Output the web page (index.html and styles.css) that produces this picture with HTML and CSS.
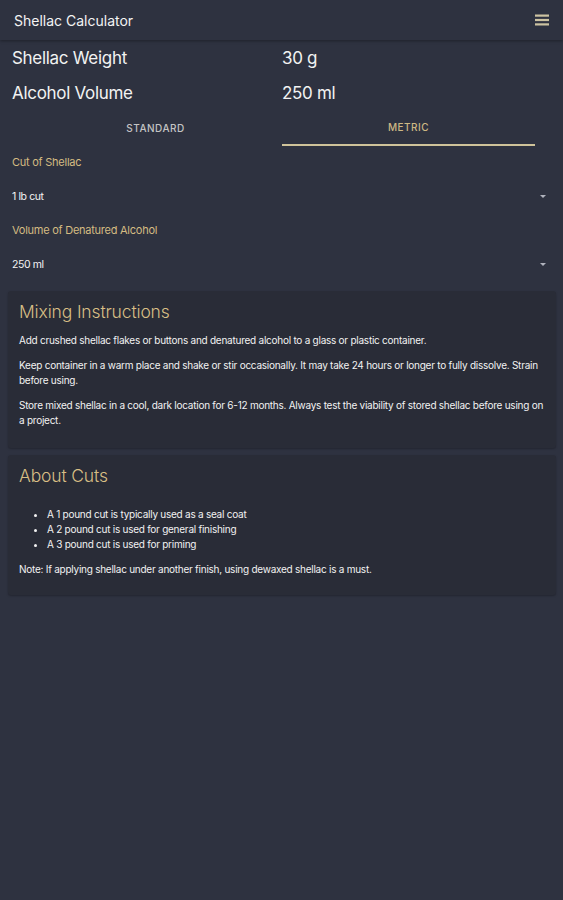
FILE: index.html
```html
<!DOCTYPE html>
<html>
<head>
<meta charset="utf-8">
<link rel="stylesheet" href="styles.css">
</head>
<body>
<header class="appbar">
  <div class="appbar-title">Shellac Calculator</div>
  <svg class="menu-icon" width="14" height="12" viewBox="0 0 14 12"><rect x="0" y="0.5" width="14" height="2.2" fill="#cdc3a2"/><rect x="0" y="4.9" width="14" height="2.2" fill="#cdc3a2"/><rect x="0" y="9.3" width="14" height="2.2" fill="#cdc3a2"/></svg>
</header>
<main class="content">
  <div class="results">
    <div class="result-row"><span class="result-label">Shellac Weight</span><span class="result-value">30 g</span></div>
    <div class="result-row"><span class="result-label">Alcohol Volume</span><span class="result-value">250 ml</span></div>
  </div>
  <div class="tabs">
    <div class="tab">STANDARD</div>
    <div class="tab tab-active">METRIC</div>
  </div>
  <div class="field">
    <div class="field-label">Cut of Shellac</div>
    <div class="field-select"><span>1 lb cut</span><span class="caret"></span></div>
  </div>
  <div class="field">
    <div class="field-label">Volume of Denatured Alcohol</div>
    <div class="field-select"><span>250 ml</span><span class="caret"></span></div>
  </div>
  <section class="card">
    <h2 class="card-title">Mixing Instructions</h2>
    <p>Add crushed shellac flakes or buttons and denatured alcohol to a glass or plastic container.</p>
    <p>Keep container in a warm place and shake or stir occasionally. It may take 24 hours or longer to fully dissolve. Strain before using.</p>
    <p>Store mixed shellac in a cool, dark location for 6-12 months. Always test the viability of stored shellac before using on a project.</p>
  </section>
  <section class="card card-cuts">
    <h2 class="card-title">About Cuts</h2>
    <ul>
      <li>A 1 pound cut is typically used as a seal coat</li>
      <li>A 2 pound cut is used for general finishing</li>
      <li>A 3 pound cut is used for priming</li>
    </ul>
    <p>Note: If applying shellac under another finish, using dewaxed shellac is a must.</p>
  </section>
</main>
</body>
</html>
```
FILE: styles.css
```css
html, body {
  margin: 0;
  padding: 0;
  background: #2e3240;
  color: #f2f2f2;
  font-family: Inter, "Noto Sans", sans-serif;
  height: 100%;
}
.appbar {
  height: 40px;
  display: flex;
  align-items: center;
  justify-content: space-between;
  padding: 0 14px 0 14px;
  box-sizing: border-box;
  background: #2e3240;
  box-shadow: 0 1px 3px rgba(0,0,0,0.35);
  position: relative;
}
.appbar-title {
  font-size: 14px;
  letter-spacing: 0;
  color: #f4f4f4;
}
.menu-icon { display: block; }
.content {
  padding: 0 7px 0 8px;
}
.results {
  padding: 0 4px;
}
.result-row {
  display: grid;
  grid-template-columns: 270px 1fr;
  height: 35px;
  align-items: center;
  font-size: 17px;
  letter-spacing: -0.3px;
}
.tabs {
  display: grid;
  grid-template-columns: 1fr 1fr;
  margin: 0 21px 0 21px;
}
.tab {
  height: 36px;
  display: flex;
  align-items: center;
  justify-content: center;
  font-size: 10px;
  font-weight: 500;
  letter-spacing: 0.5px;
  color: #c4c4c4;
  box-sizing: border-box;
}
.tab-active {
  color: #cdb884;
  border-bottom: 2px solid #cfc39a;
}
.field {
  padding: 0 4px;
}
.field-label {
  font-size: 11px;
  letter-spacing: -0.25px;
  color: #d4bb82;
  height: 32px;
  display: flex;
  align-items: center;
}
.field-select {
  height: 36px;
  display: flex;
  align-items: center;
  justify-content: space-between;
  font-size: 10.5px;
  letter-spacing: -0.4px;
  color: #f4f4f4;
  padding-right: 6px;
}
.caret {
  width: 0;
  height: 0;
  border-left: 3.5px solid transparent;
  border-right: 3.5px solid transparent;
  border-top: 3.5px solid #b0b3bd;
}
.card {
  background: #292c37;
  border-radius: 3px;
  margin: 9px 0 0 0;
  padding: 10px 6px 20px 11px;
  box-shadow: 0 1px 2px rgba(0,0,0,0.25);
}
.card-cuts { margin-top: 7px; padding-bottom: 18px; }
.card-title {
  margin: 0 0 10px 0;
  font-size: 17.5px;
  font-weight: 300;
  letter-spacing: -0.15px;
  color: #d8bf85;
  line-height: 22px;
}
.card p {
  margin: 0 0 10px 0;
  font-size: 10px;
  line-height: 15px;
  letter-spacing: -0.25px;
  color: #f2f2f2;
}
.card p:last-child { margin-bottom: 0; }
.card ul {
  margin: 20px 0 10px 0;
  padding-left: 28px;
  font-size: 10px;
  line-height: 15px;
  letter-spacing: -0.25px;
}
```
